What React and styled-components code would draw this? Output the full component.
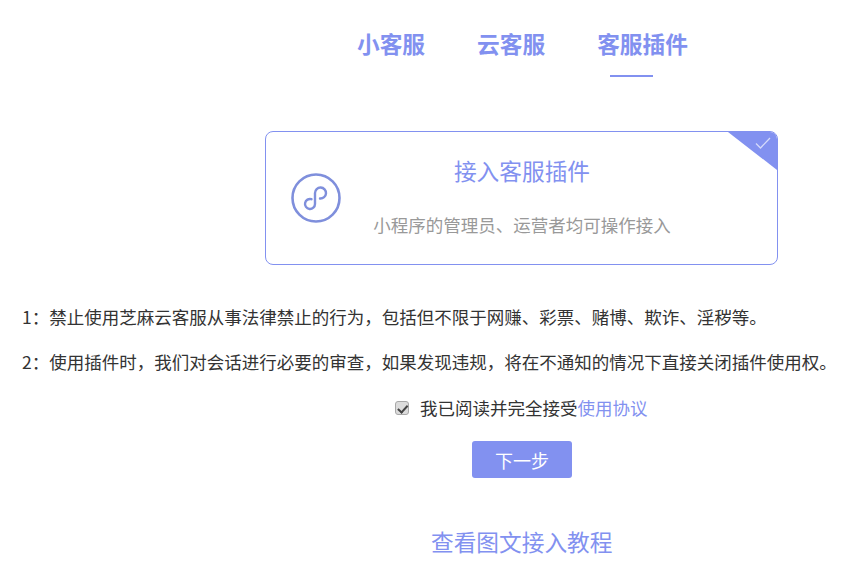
import React from 'react';
import styled, { createGlobalStyle } from 'styled-components';

const tabs = [
  { id: 1, name: '小客服' },
  { id: 2, name: '云客服' },
  { id: 3, name: '客服插件', active: true },
];

const rules = [
  '1：禁止使用芝麻云客服从事法律禁止的行为，包括但不限于网赚、彩票、赌博、欺诈、淫秽等。',
  '2：使用插件时，我们对会话进行必要的审查，如果发现违规，将在不通知的情况下直接关闭插件使用权。',
];

const App = () => {
  return (
    <Page>
      <GlobalStyle />
      <Tabs>
        {tabs.map(tab => (
          <Tab key={tab.id} $active={tab.active}>{tab.name}</Tab>
        ))}
      </Tabs>
      <Card>
        <Corner>
          <svg width="16" height="14" viewBox="0 0 16 14" fill="none">
            <path d="M1 7.5L5.5 12L15 2" stroke="#d5dafa" strokeWidth="1.3" />
          </svg>
        </Corner>
        <IconBox>
          <svg width="50" height="50" viewBox="0 0 50 50" fill="none" stroke="#7f8fdc">
            <circle cx="25" cy="25" r="23.5" strokeWidth="2.6" />
            <path
              d="M20.5 26.2A5 5 0 1 0 24 31V20A5.5 5.5 0 1 1 29 25.5"
              strokeWidth="2.4"
              strokeLinecap="round"
            />
          </svg>
        </IconBox>
        <CardBody>
          <CardTitle>接入客服插件</CardTitle>
          <CardDesc>小程序的管理员、运营者均可操作接入</CardDesc>
        </CardBody>
      </Card>
      <Rules>
        {rules.map(rule => (
          <Rule key={rule}>{rule}</Rule>
        ))}
      </Rules>
      <Agree>
        <Check type="checkbox" defaultChecked />
        <AgreeText>我已阅读并完全接受<AgreeLink>使用协议</AgreeLink></AgreeText>
      </Agree>
      <NextButton>下一步</NextButton>
      <Tutorial>查看图文接入教程</Tutorial>
    </Page>
  );
};

export default App;

const GlobalStyle = createGlobalStyle`
  html, body {
    margin: 0;
    padding: 0;
    background: #fff;
  }
  body {
    font-family: "Noto Sans CJK SC", "Liberation Sans", sans-serif;
  }
`;

const Page = styled.div`
  width: 862px;
  height: 574px;
  overflow: hidden;
  display: flex;
  flex-direction: column;
`;

const Tabs = styled.div`
  display: flex;
  gap: 52px;
  padding: 27px 0 0 357px;
  height: 50px;
`;

const Tab = styled.div`
  position: relative;
  font-size: 22.7px;
  line-height: 33px;
  font-weight: 700;
  color: #8291f0;
  ${props => props.$active && `
    &::after {
      content: "";
      position: absolute;
      left: 13px;
      top: 48px;
      width: 43px;
      height: 2px;
      background: #8291f0;
    }
  `}
`;

const Card = styled.div`
  position: relative;
  box-sizing: border-box;
  width: 513px;
  height: 134px;
  margin: 54px 0 0 265px;
  display: flex;
  border: 1px solid #8291f0;
  border-radius: 8px;
  overflow: hidden;
`;

const Corner = styled.div`
  position: absolute;
  top: 0;
  right: 0;
  width: 49px;
  height: 38px;
  background: #8291f0;
  clip-path: polygon(0 0, 100% 0, 100% 100%);
  svg {
    position: absolute;
    top: 4px;
    right: 6px;
  }
`;

const IconBox = styled.div`
  width: 50px;
  margin-left: 25px;
  padding-top: 41px;
`;

const CardBody = styled.div`
  flex: 1;
  display: flex;
  flex-direction: column;
  align-items: center;
  padding: 22px 0 0 0;
  margin-right: 74px;
`;

const CardTitle = styled.div`
  font-size: 22.7px;
  line-height: 34px;
  color: #8291f0;
`;

const CardDesc = styled.div`
  margin-top: 24px;
  font-size: 17.5px;
  line-height: 26px;
  color: #999;
`;

const Rules = styled.div`
  margin-top: 39px;
  padding-left: 22px;
  display: flex;
  flex-direction: column;
  gap: 20px;
`;

const Rule = styled.div`
  font-size: 17.5px;
  line-height: 25px;
  color: #333;
  white-space: nowrap;
`;

const Agree = styled.label`
  display: flex;
  align-items: center;
  margin: 21px 0 0 395px;
  height: 26px;
`;

const Check = styled.input`
  appearance: none;
  position: relative;
  box-sizing: border-box;
  width: 14px;
  height: 14px;
  margin: 0 11px 0 0;
  background: #dcdcdc;
  border: 1px solid #a8a8a8;
  border-radius: 3px;
  &::after {
    content: "";
    position: absolute;
    left: 3.5px;
    top: 0.5px;
    width: 3.5px;
    height: 7.5px;
    border: solid #444;
    border-width: 0 2px 2px 0;
    transform: rotate(42deg);
  }
`;

const AgreeText = styled.span`
  font-size: 17.5px;
  line-height: 26px;
  color: #333;
`;

const AgreeLink = styled.span`
  color: #8291f0;
`;

const NextButton = styled.button`
  width: 100px;
  height: 37px;
  margin: 20px 0 0 472px;
  padding: 0;
  border: none;
  border-radius: 3px;
  background: #8291f0;
  color: #fff;
  font-family: inherit;
  font-size: 18px;
`;

const Tutorial = styled.div`
  margin: 47px 0 0 431px;
  font-size: 22.7px;
  line-height: 34px;
  color: #8291f0;
`;
